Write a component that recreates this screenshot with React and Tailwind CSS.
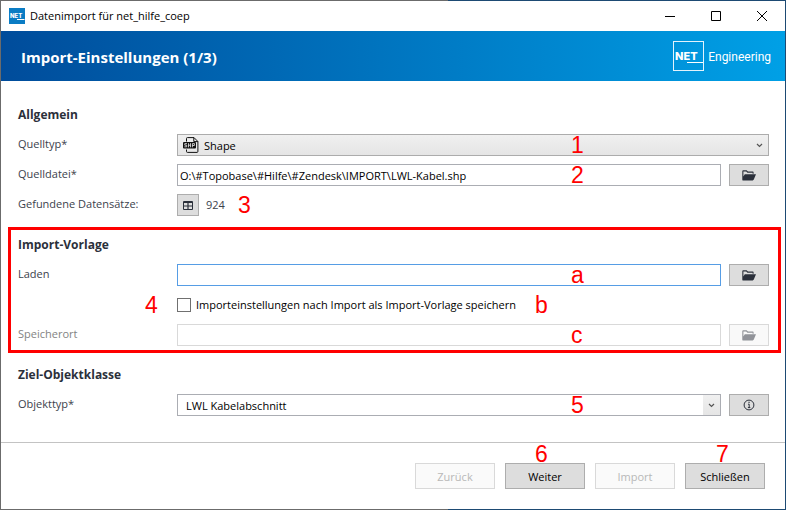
import React, { useState } from "react";

function Marker({ children, className }) {
  return (
    <span
      className={`pointer-events-none absolute font-['Liberation_Sans',sans-serif] text-[23px] leading-6 text-[#ff0000] ${className}`}
    >
      {children}
    </span>
  );
}

function FolderIcon() {
  return (
    <svg width="14" height="11" viewBox="0 0 14 11" aria-hidden="true">
      <path
        d="M0.3 9.8V1.2Q0.3 0.3 1.2 0.3H4.6L6 1.6H10.8Q11.6 1.6 11.6 2.4V3.8H10.6V2.7H5.4L4.2 1.4H1.4V6.4L2.8 4.2H14L11.8 9.6Q11.5 10.4 10.7 10.4H0.6Z"
        fill="#2b303b"
      />
    </svg>
  );
}

function TableIcon() {
  return (
    <svg width="10" height="9" viewBox="0 0 10 9" aria-hidden="true">
      <rect width="10" height="9" rx="1" fill="#2b303b" />
      <path d="M1 2H4.4V4.4H1ZM5.6 2H9V4.4H5.6ZM1 5.5H4.4V8H1ZM5.6 5.5H9V8H5.6Z" fill="#e0e0e0" />
    </svg>
  );
}

function InfoIcon() {
  return (
    <svg width="12" height="12" viewBox="0 0 12 12" fill="none" stroke="#2b303b" aria-hidden="true">
      <circle cx="6" cy="6" r="4.9" strokeWidth="1" />
      <path d="M5 5.2H6.2V8.6M4.9 8.6H7.3" strokeWidth="1" />
      <path d="M5.5 3.3H6.6" strokeWidth="1.2" />
    </svg>
  );
}

function ShapeFileIcon() {
  return (
    <svg width="16" height="16" viewBox="0 0 16 16" fill="none" stroke="#111" aria-hidden="true">
      <path d="M3.5 4.5V1.5Q3.5 0.6 4.4 0.6H11L14.9 4.5V14.4Q14.9 15.4 14 15.4H4.4Q3.5 15.4 3.5 14.4V12.5" />
      <path d="M10.8 0.6V4.6H14.9" />
      <rect x="0" y="5" width="13" height="6.5" rx="1" fill="#111" stroke="none" />
      <path
        d="M4 6.6H1.8V8.2H3.7V9.8H1.4M5.5 6.2V10.3M5.5 8.2H7.5M7.5 6.2V10.3M9.4 10.3V6.6H11.4V8.5H9.4"
        stroke="#eee"
        strokeWidth="0.8"
      />
    </svg>
  );
}

function Chevron() {
  return (
    <svg width="7" height="5" viewBox="0 0 7 5" fill="none" stroke="#555" aria-hidden="true">
      <path d="M1 1L3.5 3.5L6 1" strokeWidth="1.2" />
    </svg>
  );
}

function Row({ children }) {
  return <div className="relative flex h-[30px] items-center">{children}</div>;
}

function Label({ htmlFor, disabled, children }) {
  return (
    <label
      htmlFor={htmlFor}
      className={`w-[159px] shrink-0 pb-0.5 ${disabled ? "text-[#838383]" : "text-[#3c424c]"}`}
    >
      {children}
    </label>
  );
}

function Heading({ children }) {
  return (
    <h2 className="flex h-[30px] items-center text-xs font-bold text-[#2b303b]">
      {children}
    </h2>
  );
}

function IconButton({ label, disabled, className = "w-10", children }) {
  return (
    <button
      type="button"
      aria-label={label}
      disabled={disabled}
      className={`flex h-[22px] shrink-0 items-center justify-center border border-[#adadad] bg-[#dddddd] disabled:border-[#d9d9d9] disabled:bg-[#f9f9f9] disabled:*:opacity-50 ${className}`}
    >
      {children}
    </button>
  );
}

function FooterButton({ disabled, children }) {
  return (
    <button
      type="button"
      disabled={disabled}
      className="h-[26px] w-20 border border-[#adadad] bg-[#dddddd] pt-px text-black disabled:border-[#d9d9d9] disabled:bg-[#fafafa] disabled:text-[#b8b8b8]"
    >
      {children}
    </button>
  );
}

function TitleBar() {
  return (
    <div className="flex h-[30px] items-center bg-white pr-[18px] pl-2 text-black">
      <svg width="16" height="16" viewBox="0 0 16 16" aria-hidden="true">
        <rect width="16" height="16" fill="#0a7cc4" />
        <text x="1" y="10" fontSize="6" fontWeight="800" fill="#fff" fontFamily="Inter, sans-serif">
          NET
        </text>
        <path d="M8 11.5H15.5" stroke="#fff" />
      </svg>
      <h1 className="grow pl-[5px]">Datenimport für net_hilfe_coep</h1>
      <div className="flex items-center gap-9">
        <button type="button" aria-label="Minimieren">
          <svg width="10" height="10" viewBox="0 0 10 10" stroke="#000" fill="none">
            <path d="M0 5.5H10" />
          </svg>
        </button>
        <button type="button" aria-label="Maximieren">
          <svg width="10" height="10" viewBox="0 0 10 10" stroke="#000" fill="none">
            <path d="M0.5 0.5H9.5V9.5H0.5Z" />
          </svg>
        </button>
        <button type="button" aria-label="Fenster schließen">
          <svg width="10" height="10" viewBox="0 0 10 10" stroke="#000" fill="none">
            <path d="M0 0L10 10M10 0L0 10" />
          </svg>
        </button>
      </div>
    </div>
  );
}

function Banner() {
  return (
    <div className="flex h-[50px] items-center justify-between bg-linear-to-r from-[#004c9b] to-[#00a0e6] pr-[14px] pl-5 text-white">
      <h2 className="pt-0.5 text-[15px] leading-5 font-bold">Import-Einstellungen (1/3)</h2>
      <div className="flex items-center gap-1">
        <svg width="31" height="30" viewBox="0 0 31 30" fill="none" aria-hidden="true">
          <rect x="0.5" y="0.5" width="30" height="29" stroke="#e4f3fc" />
          <text x="2" y="19" fontSize="11" fontWeight="800" fill="#fff" fontFamily="Inter, sans-serif">
            NET
          </text>
          <path d="M14 21.5H30" stroke="#fff" />
        </svg>
        <span className="pt-px font-[Roboto,sans-serif] text-xs">Engineering</span>
      </div>
    </div>
  );
}

export default function App() {
  const [source, setSource] = useState("O:\\#Topobase\\#Hilfe\\#Zendesk\\IMPORT\\LWL-Kabel.shp");
  const [template, setTemplate] = useState("");
  const [save, setSave] = useState(false);

  return (
    <div className="flex min-h-screen flex-col bg-linear-to-r from-[#6b6b6b] from-57% to-[#1d4a73] to-57% p-px font-['Open_Sans',sans-serif] text-[11px] leading-4">
      <TitleBar />
      <Banner />
      <main className="grow bg-white pt-[19px] pb-[22px]">
        <section className="pr-4 pl-[17px]">
          <Heading>Allgemein</Heading>
          <Row>
            <Label htmlFor="type">Quelltyp*</Label>
            <div className="relative flex grow items-center">
              <select
                id="type"
                className="h-[22px] w-full appearance-none border border-[#acacac] bg-linear-to-b from-[#f0f0f0] to-[#e5e5e5] pt-px pl-[26px] text-black"
              >
                <option>Shape</option>
              </select>
              <span className="pointer-events-none absolute left-1.5">
                <ShapeFileIcon />
              </span>
              <span className="pointer-events-none absolute right-1.5">
                <Chevron />
              </span>
            </div>
            <Marker className="left-[553px]">1</Marker>
          </Row>
          <Row>
            <Label htmlFor="source">Quelldatei*</Label>
            <input
              id="source"
              type="text"
              value={source}
              onChange={(e) => setSource(e.target.value)}
              className="mr-2 h-[22px] min-w-0 grow border border-[#abadb3] bg-white px-0.5 pt-px text-black"
            />
            <IconButton label="Quelldatei öffnen">
              <FolderIcon />
            </IconButton>
            <Marker className="left-[553px]">2</Marker>
          </Row>
          <Row>
            <Label htmlFor="records">Gefundene Datensätze:</Label>
            <IconButton label="Datensätze anzeigen" className="w-[22px]">
              <TableIcon />
            </IconButton>
            <output id="records" className="pl-[7px] text-[#3c424c]">
              924
            </output>
            <Marker className="left-[220px]">3</Marker>
          </Row>
        </section>

        <section className="mx-[7px] mt-[7px] mr-1 mb-[7px] border-3 border-[#ff0000] pr-[9px] pl-[7px]">
          <Heading>Import-Vorlage</Heading>
          <Row>
            <Label htmlFor="template">Laden</Label>
            <input
              id="template"
              type="text"
              value={template}
              onChange={(e) => setTemplate(e.target.value)}
              className="mr-2 h-[22px] min-w-0 grow border border-[#569de5] bg-white px-0.5 text-black outline-none"
            />
            <IconButton label="Vorlage öffnen">
              <FolderIcon />
            </IconButton>
            <Marker className="left-[553px]">a</Marker>
          </Row>
          <Row>
            <div className="flex items-center pl-[159px]">
              <input
                id="save"
                type="checkbox"
                checked={save}
                onChange={(e) => setSave(e.target.checked)}
                className="size-[14px] appearance-none border border-[#707070] bg-white checked:bg-[#569de5]"
              />
              <label htmlFor="save" className="pl-[5px] text-black">
                Importeinstellungen nach Import als Import-Vorlage speichern
              </label>
            </div>
            <Marker className="left-[127px]">4</Marker>
            <Marker className="left-[517px]">b</Marker>
          </Row>
          <Row>
            <Label htmlFor="location" disabled>
              Speicherort
            </Label>
            <input
              id="location"
              type="text"
              disabled
              className="mr-2 h-[22px] min-w-0 grow border border-[#d9d9d9] bg-white px-0.5"
            />
            <IconButton label="Speicherort öffnen" disabled>
              <FolderIcon />
            </IconButton>
            <Marker className="left-[553px]">c</Marker>
          </Row>
        </section>

        <section className="pr-4 pl-[17px]">
          <Heading>Ziel-Objektklasse</Heading>
          <Row>
            <Label htmlFor="object">Objekttyp*</Label>
            <div className="relative mr-2 flex grow items-center">
              <select
                id="object"
                className="h-[22px] w-full appearance-none border border-[#abadb3] bg-white pt-px pl-2 text-black"
              >
                <option>LWL Kabelabschnitt</option>
              </select>
              <span className="pointer-events-none absolute right-px flex h-5 w-[17px] items-center justify-center bg-linear-to-b from-[#f0f0f0] to-[#e5e5e5]">
                <Chevron />
              </span>
            </div>
            <IconButton label="Info">
              <InfoIcon />
            </IconButton>
            <Marker className="left-[553px]">5</Marker>
          </Row>
        </section>
      </main>

      <footer className="flex justify-end gap-[10px] border-t border-[#c3c3c3] bg-white pt-5 pr-5 pb-5">
        <FooterButton disabled>Zurück</FooterButton>
        <div className="relative">
          <FooterButton>Weiter</FooterButton>
          <Marker className="-top-[21px] left-[30px]">6</Marker>
        </div>
        <FooterButton disabled>Import</FooterButton>
        <div className="relative">
          <FooterButton>Schließen</FooterButton>
          <Marker className="-top-[21px] left-[31px]">7</Marker>
        </div>
      </footer>
    </div>
  );
}
